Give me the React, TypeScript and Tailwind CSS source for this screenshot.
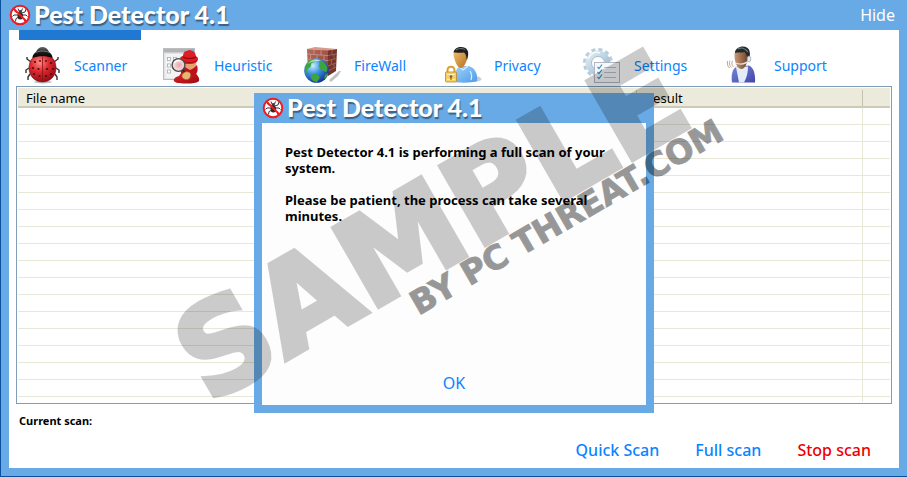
import { useState } from "react";
import type { ReactNode } from "react";

const BugLogo = () => (
  <svg viewBox="0 0 22 22" className="size-[22px] shrink-0" aria-hidden="true">
    <circle cx="11" cy="11" r="9" fill="#fff" />
    <g stroke="#222" strokeWidth="0.900" fill="none">
      <path d="M10 9 6.500 8 5 5.500M9.500 11H5L3.500 12.500M10 13l-3 1.500-.5 3M12.500 9l3.500-1 1-3M13 11h4l1.500 1.500M12.500 13l3 2v2.500M10 7 9 4.500M12.500 7l1-2.500" />
    </g>
    <ellipse cx="11.300" cy="12" rx="2.800" ry="3.600" fill="#2b2b2b" />
    <circle cx="11.300" cy="7.800" r="1.700" fill="#3b3b3b" />
    <path d="M4.500 4.500 17.500 17.500" stroke="#ee1c22" strokeWidth="1.800" />
    <circle cx="11" cy="11" r="9.300" fill="none" stroke="#ee1c22" strokeWidth="2" />
  </svg>
);

const ScannerIcon = () => (
  <svg viewBox="0 0 40 40" className="size-10 shrink-0" aria-hidden="true">
    <defs>
      <radialGradient id="shell" cx="0.4" cy="0.3" r="0.75">
        <stop offset="0" stopColor="#ff8a86" />
        <stop offset="0.45" stopColor="#dd2930" />
        <stop offset="1" stopColor="#8e0a12" />
      </radialGradient>
      <linearGradient id="bugHead" x1="0" y1="0" x2="0" y2="1">
        <stop offset="0" stopColor="#6a6a6a" />
        <stop offset="0.5" stopColor="#1c1c1c" />
        <stop offset="1" stopColor="#000" />
      </linearGradient>
    </defs>
    <ellipse cx="20" cy="36" rx="9" ry="1.500" fill="#aaa" opacity="0.7" />
    <path d="M8 16 4 13v-2M6 22l-3 2v3M7 28l-2 3v3M31 16l4-3v-2M33 22l3 2v3M32 28l2 3v3" stroke="#333" strokeWidth="1.400" fill="none" />
    <path d="M19.500 8C10 8 6 15 6 22c0 8 6 14 13.500 14S33 30 33 22c0-7-4-14-13.500-14Z" fill="url(#shell)" stroke="#7b0c10" strokeWidth="0.600" />
    <path d="M19.500 11v25" stroke="#8d1217" strokeWidth="0.800" />
    <path d="M9.500 12c0-4 3-5 4-7 1-2 3-4 6-4s5 2 6 4c1 2 4 3 4 7-5-2.500-15-2.500-20 0Z" fill="url(#bugHead)" />
    <path d="M13 6.500c3-2 10-2 13 0" stroke="#8b8b8b" strokeWidth="0.800" fill="none" />
    <g fill="#4a0a0c">
      <circle cx="12" cy="16" r="1.100" />
      <circle cx="17" cy="15" r="0.900" />
      <circle cx="23" cy="15" r="0.900" />
      <circle cx="28" cy="17" r="1.100" />
      <circle cx="10" cy="22" r="1" />
      <circle cx="15.500" cy="23" r="1.100" />
      <circle cx="24" cy="23" r="1.100" />
      <circle cx="30" cy="23" r="1" />
      <circle cx="11" cy="28" r="1" />
      <circle cx="16.500" cy="30" r="1.100" />
      <circle cx="23" cy="30" r="1.100" />
      <circle cx="28" cy="28" r="1" />
    </g>
  </svg>
);

const HeuristicIcon = () => (
  <svg viewBox="0 0 40 40" className="size-10 shrink-0" aria-hidden="true">
    <defs>
      <linearGradient id="coat" x1="0" y1="0" x2="1" y2="1">
        <stop offset="0" stopColor="#e2232a" />
        <stop offset="1" stopColor="#9a0a10" />
      </linearGradient>
      <radialGradient id="lens" cx="0.55" cy="0.5" r="0.6">
        <stop offset="0" stopColor="#e9a5ab" />
        <stop offset="1" stopColor="#f7f3f3" />
      </radialGradient>
    </defs>
    <rect x="0.500" y="2.500" width="31" height="31" fill="#e2e3e4" stroke="#bdbdbd" />
    <rect x="1" y="3" width="30" height="3.500" fill="#b1b4b7" />
    <rect x="27" y="3" width="4" height="3.500" fill="#79b1ea" />
    <rect x="2.500" y="8" width="27.500" height="24" fill="#f2f3f4" />
    <g fill="#fff" stroke="#aaa" strokeWidth="0.800">
      <rect x="4.500" y="11.500" width="3" height="3" />
      <rect x="4.500" y="18" width="3" height="3" />
      <rect x="4.500" y="24" width="3" height="3" />
      <rect x="10.500" y="11.500" width="3" height="3" />
    </g>
    <path d="M12 36c-3-2 0-5 4-6l3-4h12c3 2 6 6 5 9-2 2-7 2.500-12 2.500S13 37 12 36Z" fill="url(#coat)" />
    <path d="M19 15h14c1 6-1 13-7 13-5 0-7-7-7-13Z" fill="#e9a06f" />
    <path d="M17 19c4 1 8 4 10 5 3-1 5-3 7-5 1 3 1 7-1 9-4 2-12 1-15-1Z" fill="#bd1119" />
    <path d="M20 11c0-5 2-6 4-6 1.500-1.500 3.500-1.500 5 0 2 0 4 2 4 7Z" fill="#dc2028" />
    <path d="M17 13c0-3 4-4 9-4s9 1 9 4-3 5-9 5-9-2-9-5Z" fill="#db1e25" />
    <path d="M20 11c3 2 10 2 13 0" stroke="#93080d" strokeWidth="1.200" fill="none" />
    <path d="M18 14c2 3 13 4 16 0" stroke="#a30d13" strokeWidth="0.900" fill="none" />
    <circle cx="15.500" cy="19" r="6.400" fill="url(#lens)" stroke="#4a4a4a" strokeWidth="1.400" />
    <path d="M11.500 17c1-2 3-3 5-2" stroke="#fff" strokeWidth="1.400" fill="none" />
    <path d="m20 24 4 5" stroke="#2b2b2b" strokeWidth="2" />
    <path d="M19 30c0-3 4-5 6-4 2 0 3 2 2.500 4-.5 3-3 4-5 3.500-2-.5-4-2-3.500-3.500Z" fill="#edb376" stroke="#a8652f" strokeWidth="0.600" />
  </svg>
);

const FirewallIcon = () => (
  <svg viewBox="0 0 40 40" className="size-10 shrink-0" aria-hidden="true">
    <defs>
      <radialGradient id="globe" cx="0.35" cy="0.3" r="0.75">
        <stop offset="0" stopColor="#c9eeff" />
        <stop offset="0.45" stopColor="#3a93e0" />
        <stop offset="1" stopColor="#122f94" />
      </radialGradient>
      <linearGradient id="wall" x1="0" y1="0" x2="1" y2="1">
        <stop offset="0" stopColor="#b9695a" />
        <stop offset="1" stopColor="#8a4439" />
      </linearGradient>
    </defs>
    <path d="M26 34 36 25h2l-3 5-7 6Z" fill="#888" opacity="0.5" />
    <path d="M4 3 25 4v25L5 26Z" fill="url(#wall)" />
    <path d="m25 4 9-1-1 22-8 5Z" fill="#753429" />
    <path d="m4 3 8-2 22 2-9 1.500Z" fill="#d69b8a" />
    <g stroke="#d3a092" strokeWidth="0.700" fill="none">
      <path d="M4 8l21 1.500M4 13l21 1.500M4 18l21 2M18 24l7 1" />
      <path d="M11 3.500v5M18 4v5M7.500 8.500v5M14 9v5M21 9.500v5M11 13.500v5M18 14v5M22 20v5" />
      <path d="M25 9.500l9-1.500M25 14.500l9-2M25 20l8-3M25 25l8-4M29 4v5M31 8v5M28.500 13.500v5M31 17.500v5" stroke="#a87165" />
    </g>
    <circle cx="13.500" cy="24.500" r="12.300" fill="url(#globe)" />
    <g fill="#3da53b">
      <path d="M2.500 20c2-4 5-7 8-7 2 1 3 2 1 3l-3 1-1 4-3 2-1 4-2-1Z" />
      <path d="M16 14c4 1 7 4 8.500 8l-1 4-3-1-3-2-2-3 1-2Z" />
      <path d="M8 29c3-2 6-1 8 1 2 2-1 4-2 6-4 0-7-3-6-7Z" />
      <path d="M22 29l3-2c0 2-2 5-4 6Z" />
    </g>
    <path d="M5 18c2-4 8-6 13-3-4 0-9 0-13 3Z" fill="#fff" opacity="0.6" />
  </svg>
);

const PrivacyIcon = () => (
  <svg viewBox="0 0 40 40" className="size-10 shrink-0" aria-hidden="true">
    <defs>
      <linearGradient id="face" x1="0" y1="0" x2="1" y2="1">
        <stop offset="0" stopColor="#f9c56b" />
        <stop offset="1" stopColor="#b06f22" />
      </linearGradient>
      <linearGradient id="shirt" x1="0" y1="0" x2="1" y2="1">
        <stop offset="0" stopColor="#a6d4fb" />
        <stop offset="1" stopColor="#4a9ae8" />
      </linearGradient>
    </defs>
    <ellipse cx="31" cy="33" rx="7.500" ry="3" fill="#b8b8b8" opacity="0.7" />
    <path d="M11 36c0-8 2-14 6-16h9c6 2 9 8 8 15-5 2-17 2-23 1Z" fill="url(#shirt)" />
    <path d="m16 20 4 4 5-4M27 25c2 3 2 6 1 9" stroke="#dceefe" strokeWidth="1.200" fill="none" />
    <path d="M10.500 9c0-5 3-7 7-7 5 0 8 3 7 9-1 6-4 11-7 11s-6-7-7-13Z" fill="url(#face)" />
    <path d="M10.500 6.500c1-4 4-5.500 7.500-5.500 6 0 8 4 7 9l-1 4c-1-2 0-5-3-7.500-4 1-7-.5-10.500 0Z" fill="#1f1f1f" />
    <path d="M13 4c3-2 7-2 9 0" stroke="#777" strokeWidth="1" fill="none" />
    <path d="M4.500 27v-2.500c0-5 7-5 7 0V27" stroke="#d9a12e" strokeWidth="2" fill="none" />
    <rect x="2.500" y="26" width="11" height="10" rx="1" fill="#f6cf6a" stroke="#b98a22" strokeWidth="0.800" />
    <path d="M4 28.500h8M4 33.500h8" stroke="#fdeeb9" strokeWidth="1" />
    <circle cx="8" cy="30.500" r="1.300" fill="#8a621a" />
    <path d="M8 31v3" stroke="#8a621a" strokeWidth="1.200" />
  </svg>
);

const SettingsIcon = () => (
  <svg viewBox="0 0 40 40" className="size-10 shrink-0" aria-hidden="true">
    <defs>
      <linearGradient id="gear" x1="0" y1="0" x2="1" y2="1">
        <stop offset="0" stopColor="#dfeaf1" />
        <stop offset="0.5" stopColor="#bdd3e1" />
        <stop offset="1" stopColor="#8fb0c8" />
      </linearGradient>
    </defs>
    <circle cx="15" cy="17" r="13.500" fill="none" stroke="#b7cddb" strokeWidth="3" strokeDasharray="4 3.070" />
    <circle cx="15" cy="17" r="9.500" fill="none" stroke="url(#gear)" strokeWidth="6" />
    <circle cx="15" cy="17" r="6.500" fill="#fff" stroke="#8fb3ca" strokeWidth="0.800" />
    <path d="M5 13c2-5 7-8 12-6" stroke="#f6fafc" strokeWidth="1.500" fill="none" />
    <rect x="11.500" y="16.500" width="25" height="20" fill="#f6f8fc" stroke="#b3b7c3" />
    <g stroke="#bcc0ce" strokeWidth="1">
      <path d="M21 21.500h12M21 26.500h12M21 31.500h12" />
    </g>
    <g stroke="#3a98c0" strokeWidth="1.200" fill="none">
      <path d="m14.500 21 1.500 1.500 3-4M14.500 26l1.500 1.500 3-4M14.500 31l1.500 1.500 3-4" />
    </g>
  </svg>
);

const SupportIcon = () => (
  <svg viewBox="0 0 40 40" className="size-10 shrink-0" aria-hidden="true">
    <defs>
      <linearGradient id="agentFace" x1="0" y1="0" x2="1" y2="0">
        <stop offset="0" stopColor="#c99a74" />
        <stop offset="1" stopColor="#6e4229" />
      </linearGradient>
      <linearGradient id="jacket" x1="0" y1="0" x2="1" y2="1">
        <stop offset="0" stopColor="#7786dd" />
        <stop offset="1" stopColor="#4446a8" />
      </linearGradient>
    </defs>
    <path d="M9 36.500c-1-7 0-14 5-16l12-1c5 2 6.500 9 6 17Z" fill="url(#jacket)" />
    <path d="m13 21 3 15.500h5c3-5 4-11 4-16Z" fill="#e3ecf8" />
    <path d="M11.500 9c0-5 3-7 7-7 5 0 7 4 6.500 9-1 7-3 12-6.500 12-4 0-7-6-7-14Z" fill="url(#agentFace)" />
    <path d="M12 7c0-4 4-6.500 8-6.500 6 0 8 5 6.500 11.500l-2 2c0-3-1-6-3-8-3 1-6.500 0-9.500 1Z" fill="#242a2c" />
    <path d="M15 3c3-2 7-1 10 3" stroke="#6f8282" strokeWidth="1.200" fill="none" />
    <path d="M26 14c-3 4-8 5-14 3" stroke="#dfe3e8" strokeWidth="1.300" fill="none" />
    <ellipse cx="26" cy="13" rx="1.800" ry="3" fill="#e6e9ee" stroke="#8d949f" strokeWidth="0.600" />
    <path d="M9.500 15c-1 2-1 4 1 6M7 14.500c-1 2-1 5 1.500 7M4.500 15c-.5 3 0 5 2 7" stroke="#c4a28b" strokeWidth="1" fill="none" />
  </svg>
);

const tabs: { name: string; icon: ReactNode }[] = [
  { name: "Scanner", icon: <ScannerIcon /> },
  { name: "Heuristic", icon: <HeuristicIcon /> },
  { name: "FireWall", icon: <FirewallIcon /> },
  { name: "Privacy", icon: <PrivacyIcon /> },
  { name: "Settings", icon: <SettingsIcon /> },
  { name: "Support", icon: <SupportIcon /> },
];

const rows = Array.from({ length: 17 }, (_, i) => i);

const TitleBar = ({ children }: { children?: ReactNode }) => (
  <div className="flex h-[30px] items-center justify-between bg-[#67aae5] pr-3 pl-2">
    <div className="flex items-center gap-[3px]">
      <BugLogo />
      <span className="pb-0.5 font-['Lato',sans-serif] text-[25px] leading-7 font-black whitespace-nowrap text-white [text-shadow:1px_2px_1px_#3a5f85]">
        Pest Detector 4.1
      </span>
    </div>
    {children}
  </div>
);

const FileTable = () => (
  <div className="mx-[7px] border border-[#7f9db9] bg-white p-px">
    <table className="w-full table-fixed border-separate border-spacing-0 text-left text-[13px] text-black">
      <colgroup>
        <col />
        <col className="w-[227px]" />
        <col className="w-[27px]" />
      </colgroup>
      <thead>
        <tr className="h-5 bg-[#ebeadb]">
          <th className="border-b-2 border-[#cdcab8] p-0 pt-0.5 pl-2 leading-4 font-normal">File name</th>
          <th className="border-b-2 border-[#cdcab8] p-0 pt-0.5 leading-4 font-normal">
            <div className="border-r border-l border-r-[#c5c2b2] border-l-[#c5c2b2] pl-2">Result</div>
          </th>
          <th className="border-b-2 border-[#cdcab8] p-0" />
        </tr>
      </thead>
      <tbody>
        {rows.map((row) => (
          <tr key={row} className="h-[17px]">
            <td className="border-b border-[#e9e7d7] p-0" />
            <td className="border-r border-b border-[#e9e7d7] p-0" />
            <td className="border-b border-[#e9e7d7] p-0" />
          </tr>
        ))}
        <tr className="h-[5px]">
          <td className="p-0" />
          <td className="border-r border-[#e9e7d7] p-0" />
          <td className="p-0" />
        </tr>
      </tbody>
    </table>
  </div>
);

const ScanDialog = ({ onClose }: { onClose: () => void }) => (
  <div
    role="dialog"
    aria-label="Pest Detector 4.1"
    className="absolute inset-x-0 top-[93px] mx-auto flex h-80 w-[400px] flex-col bg-[#67aae5]"
  >
    <TitleBar />
    <div className="mx-2 mb-2 flex flex-1 flex-col justify-between bg-[#fdfdfd] px-[23px] pt-[21px] pb-2.5">
      <div className="space-y-4 text-[13px] leading-4 font-bold text-black">
        <p>Pest Detector 4.1 is performing a full scan of your system.</p>
        <p>Please be patient, the process can take several minutes.</p>
      </div>
      <button type="button" onClick={onClose} className="self-center text-base leading-6 text-[#0a84ff]">
        OK
      </button>
    </div>
  </div>
);

const Watermark = () => (
  <div
    aria-hidden="true"
    className="pointer-events-none absolute inset-0 overflow-hidden font-['DejaVu_Sans',sans-serif] leading-none font-bold whitespace-nowrap text-black select-none"
  >
    <span className="absolute top-[297px] left-[217px] origin-bottom-left -rotate-30 text-[124px] opacity-20 [-webkit-text-stroke:5px_black]">
      SAMPLE
    </span>
    <span className="absolute top-[287px] left-[420px] origin-bottom-left -rotate-30 text-[33px] opacity-40 [-webkit-text-stroke:1px_black]">
      BY PC THREAT.COM
    </span>
  </div>
);

export default function App() {
  const [active, setActive] = useState("Scanner");
  const [dialogOpen, setDialogOpen] = useState(true);

  return (
    <div className="relative flex min-h-screen flex-col overflow-hidden border-b border-l border-[#0a509f] bg-[#67aae5] font-['Noto_Sans',sans-serif]">
      <TitleBar>
        <button type="button" className="text-base leading-6 text-white">
          Hide
        </button>
      </TitleBar>

      <main className="mx-2 mb-2 flex flex-1 flex-col bg-white">
        <nav className="flex gap-[18px] pl-2.5">
          {tabs.map((tab) => (
            <button
              key={tab.name}
              type="button"
              onClick={() => setActive(tab.name)}
              className="w-[122px] text-left"
            >
              <div className={active === tab.name ? "h-2.5 bg-[#1f78d1]" : "h-2.5"} />
              <div className="flex items-center gap-[11px] pt-1.5 pl-1 text-sm text-[#0a84ff]">
                {tab.icon}
                {tab.name}
              </div>
            </button>
          ))}
        </nav>

        <FileTable />

        <p className="mt-[9px] pl-2.5 text-[11px] leading-4 font-bold text-black">Current scan:</p>

        <div className="mt-[9px] mb-1.5 flex justify-end gap-9 pr-7 text-base leading-6 font-medium text-[#0a84ff]">
          <button type="button">Quick Scan</button>
          <button type="button" onClick={() => setDialogOpen(true)}>
            Full scan
          </button>
          <button type="button" className="text-[#f00000]">
            Stop scan
          </button>
        </div>
      </main>

      {dialogOpen && <ScanDialog onClose={() => setDialogOpen(false)} />}
      <Watermark />
    </div>
  );
}
